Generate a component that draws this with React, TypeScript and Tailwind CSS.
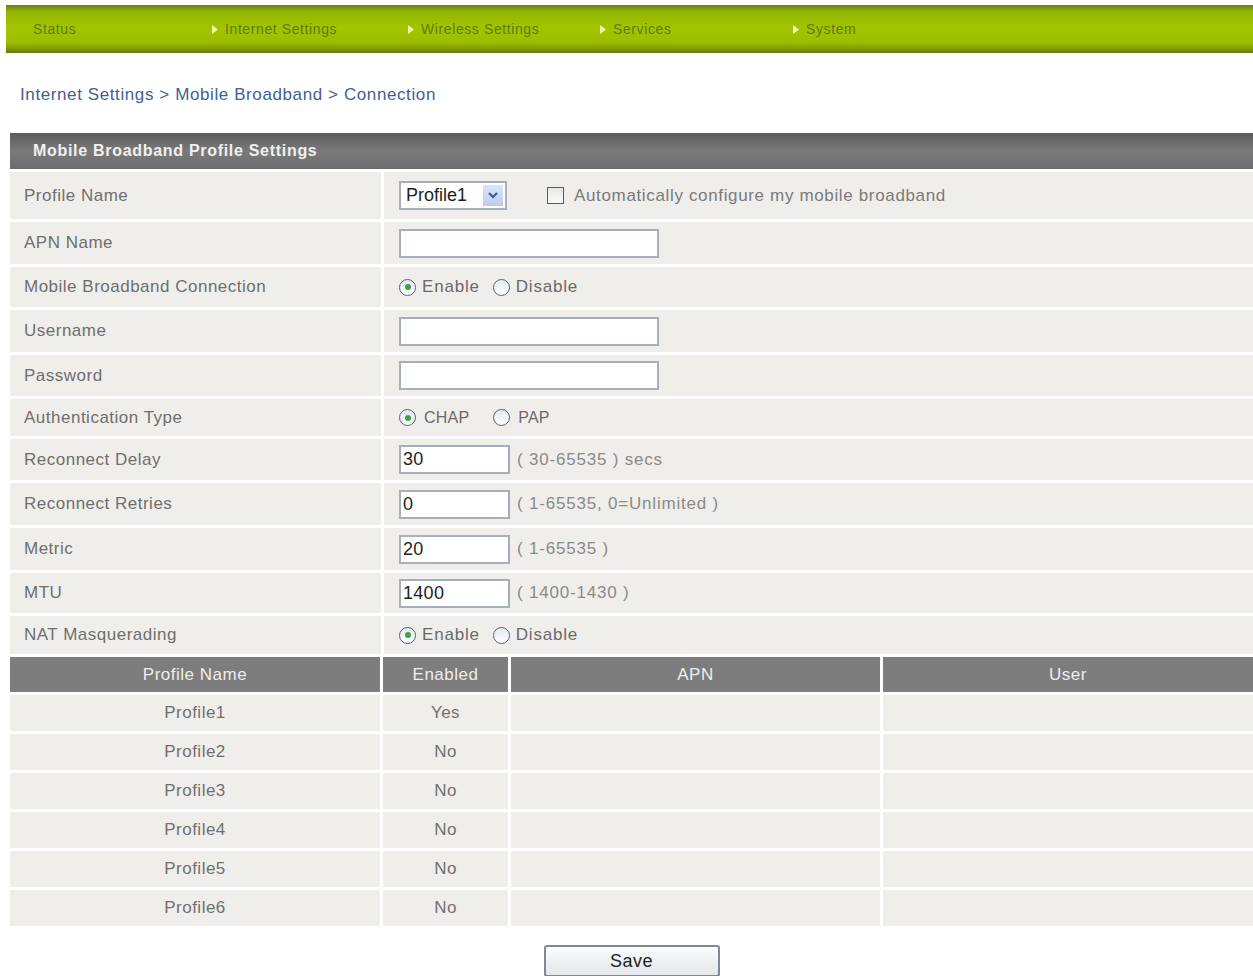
import React from "react";

const font = { fontFamily: '"Liberation Sans", Arial, sans-serif' };

const navItems = [
  { label: "Internet Settings", w: "w-[196px]" },
  { label: "Wireless Settings", w: "w-[192px]" },
  { label: "Services", w: "w-[193px]" },
  { label: "System", w: "w-[196px]" },
];

function NavArrow() {
  return (
    <svg width="6" height="9" viewBox="0 0 6 9" className="mr-[7px] shrink-0">
      <path d="M0 0 L6 4.5 L0 9 Z" fill="#f2f5b0" />
    </svg>
  );
}

function Radio({ checked }: { checked?: boolean }) {
  return (
    <span className="flex h-[17px] w-[17px] shrink-0 items-center justify-center rounded-full border-[1.5px] border-[#4f6478] bg-gradient-to-b from-[#e4eaef] to-[#ffffff]">
      {checked && <span className="h-[6px] w-[6px] rounded-full bg-[#3fa046]" />}
    </span>
  );
}

function RadioPair({ a, b, small }: { a: string; b: string; small?: boolean }) {
  return (
    <div
      className={`flex items-center text-[#6a6a6a] ${
        small ? "text-[16px] tracking-[0.2px]" : "text-[17px] tracking-[0.8px]"
      }`}
    >
      <Radio checked />
      <span className={small ? "ml-[8px]" : "ml-[6px]"}>{a}</span>
      <span className={small ? "ml-[24px]" : "ml-[13px]"}>
        <Radio />
      </span>
      <span className={small ? "ml-[8px]" : "ml-[6px]"}>{b}</span>
    </div>
  );
}

function TextBox({ value = "", wide }: { value?: string; wide?: boolean }) {
  return (
    <div
      className={`flex h-[29px] items-center border-2 border-[#a7b0ba] bg-white px-[2px] text-[18px] tracking-[0.3px] text-[#1e1e1e] ${
        wide ? "w-[260px]" : "w-[111px]"
      }`}
    >
      {value}
    </div>
  );
}

function Hint({ children }: { children: React.ReactNode }) {
  return <span className="ml-[7px] text-[17px] tracking-[0.8px] text-[#8a8a8a]">{children}</span>;
}

type Row = { label: string; h: string; body: React.ReactNode };

const rows: Row[] = [
  {
    label: "Profile Name",
    h: "h-[47px]",
    body: (
      <div className="flex items-center">
        <div className="flex h-[29px] w-[108px] items-center justify-between border-2 border-[#a7b0ba] bg-white pl-[5px] pr-[2px] text-[18px] text-[#1e1e1e]">
          <span>Profile1</span>
          <span className="flex h-[21px] w-[20px] items-center justify-center bg-gradient-to-b from-[#dbe6f7] to-[#b9cdea]">
            <svg width="10" height="7" viewBox="0 0 10 7">
              <path d="M1 1 L5 5 L9 1" stroke="#3b5aa8" strokeWidth="2.2" fill="none" />
            </svg>
          </span>
        </div>
        <span className="ml-[40px] h-[17px] w-[17px] border-[1.5px] border-[#5a5a5a] bg-gradient-to-b from-[#e6e6e6] to-[#fbfbfb]" />
        <span className="ml-[10px] text-[17px] tracking-[0.65px] text-[#7a7a7a]">
          Automatically configure my mobile broadband
        </span>
      </div>
    ),
  },
  { label: "APN Name", h: "h-[42px]", body: <TextBox wide /> },
  { label: "Mobile Broadband Connection", h: "h-[40px]", body: <RadioPair a="Enable" b="Disable" /> },
  { label: "Username", h: "h-[42px]", body: <TextBox wide /> },
  { label: "Password", h: "h-[41px]", body: <TextBox wide /> },
  { label: "Authentication Type", h: "h-[37px]", body: <RadioPair a="CHAP" b="PAP" small /> },
  {
    label: "Reconnect Delay",
    h: "h-[41px]",
    body: (
      <div className="flex items-center">
        <TextBox value="30" />
        <Hint>( 30-65535 ) secs</Hint>
      </div>
    ),
  },
  {
    label: "Reconnect Retries",
    h: "h-[42px]",
    body: (
      <div className="flex items-center">
        <TextBox value="0" />
        <Hint>( 1-65535, 0=Unlimited )</Hint>
      </div>
    ),
  },
  {
    label: "Metric",
    h: "h-[42px]",
    body: (
      <div className="flex items-center">
        <TextBox value="20" />
        <Hint>( 1-65535 )</Hint>
      </div>
    ),
  },
  {
    label: "MTU",
    h: "h-[40px]",
    body: (
      <div className="flex items-center">
        <TextBox value="1400" />
        <Hint>( 1400-1430 )</Hint>
      </div>
    ),
  },
  { label: "NAT Masquerading", h: "h-[38px]", body: <RadioPair a="Enable" b="Disable" /> },
];

const profiles = [
  ["Profile1", "Yes"],
  ["Profile2", "No"],
  ["Profile3", "No"],
  ["Profile4", "No"],
  ["Profile5", "No"],
  ["Profile6", "No"],
];

export default function App() {
  return (
    <div className="min-h-screen w-[1253px] overflow-hidden bg-white" style={font}>
      {/* top menu */}
      <div className="ml-[6px] mt-[5px] flex h-[48px] items-center bg-[linear-gradient(to_bottom,#6e8012_0%,#93b400_14%,#a2c400_45%,#9dbe00_78%,#6b7d0c_100%)] text-[14px] tracking-[0.6px] text-[#5f7b06]">
        <div className="w-[206px] pl-[27px]">Status</div>
        {navItems.map((n) => (
          <div key={n.label} className={`flex items-center ${n.w}`}>
            <NavArrow />
            {n.label}
          </div>
        ))}
      </div>

      {/* breadcrumb */}
      <div className="ml-[20px] mt-[32px] h-[20px] text-[17px] leading-[20px] tracking-[0.6px] text-[#3f5f94]">
        Internet Settings &gt; Mobile Broadband &gt; Connection
      </div>

      <div className="ml-[10px] mt-[28px]">
        {/* section title */}
        <div className="flex h-[36px] items-center bg-gradient-to-b from-[#5c5c5c] via-[#7a7a7a] to-[#6c6c6c] pl-[23px] text-[16px] font-bold tracking-[0.7px] text-[#f0f0f0]">
          Mobile Broadband Profile Settings
        </div>

        {/* settings form */}
        <div className="mt-[3px] flex flex-col gap-[3px]">
          {rows.map((r) => (
            <div key={r.label} className={`grid grid-cols-[371px_1fr] gap-x-[3px] ${r.h}`}>
              <div className="flex items-center bg-[#f0eeeb] pl-[14px] text-[17px] tracking-[0.5px] text-[#6e6e6e]">
                {r.label}
              </div>
              <div className="flex items-center bg-[#f0eeeb] pl-[15px]">{r.body}</div>
            </div>
          ))}
        </div>

        {/* profile list */}
        <div className="mt-[3px] flex flex-col gap-[3px]">
          <div className="grid h-[35px] grid-cols-[370px_125px_369px_1fr] gap-x-[3px] text-[17px] tracking-[0.5px] text-[#eeeeee]">
            {["Profile Name", "Enabled", "APN", "User"].map((h) => (
              <div key={h} className="flex items-center justify-center bg-[#7d7d7d]">
                {h}
              </div>
            ))}
          </div>
          {profiles.map(([name, en]) => (
            <div
              key={name}
              className="grid h-[36px] grid-cols-[370px_125px_369px_1fr] gap-x-[3px] text-[17px] tracking-[0.5px] text-[#707070]"
            >
              <div className="flex items-center justify-center bg-[#f0eeeb]">{name}</div>
              <div className="flex items-center justify-center bg-[#f0eeeb]">{en}</div>
              <div className="bg-[#f0eeeb]" />
              <div className="bg-[#f0eeeb]" />
            </div>
          ))}
        </div>

        <div className="mt-[19px] flex justify-center">
          <button className="h-[32px] w-[176px] rounded-[3px] border-2 border-[#7d8994] bg-gradient-to-b from-[#fbfcfc] to-[#e3e8ec] text-[18px] tracking-[0.5px] text-[#222]">
            Save
          </button>
        </div>
      </div>
    </div>
  );
}
